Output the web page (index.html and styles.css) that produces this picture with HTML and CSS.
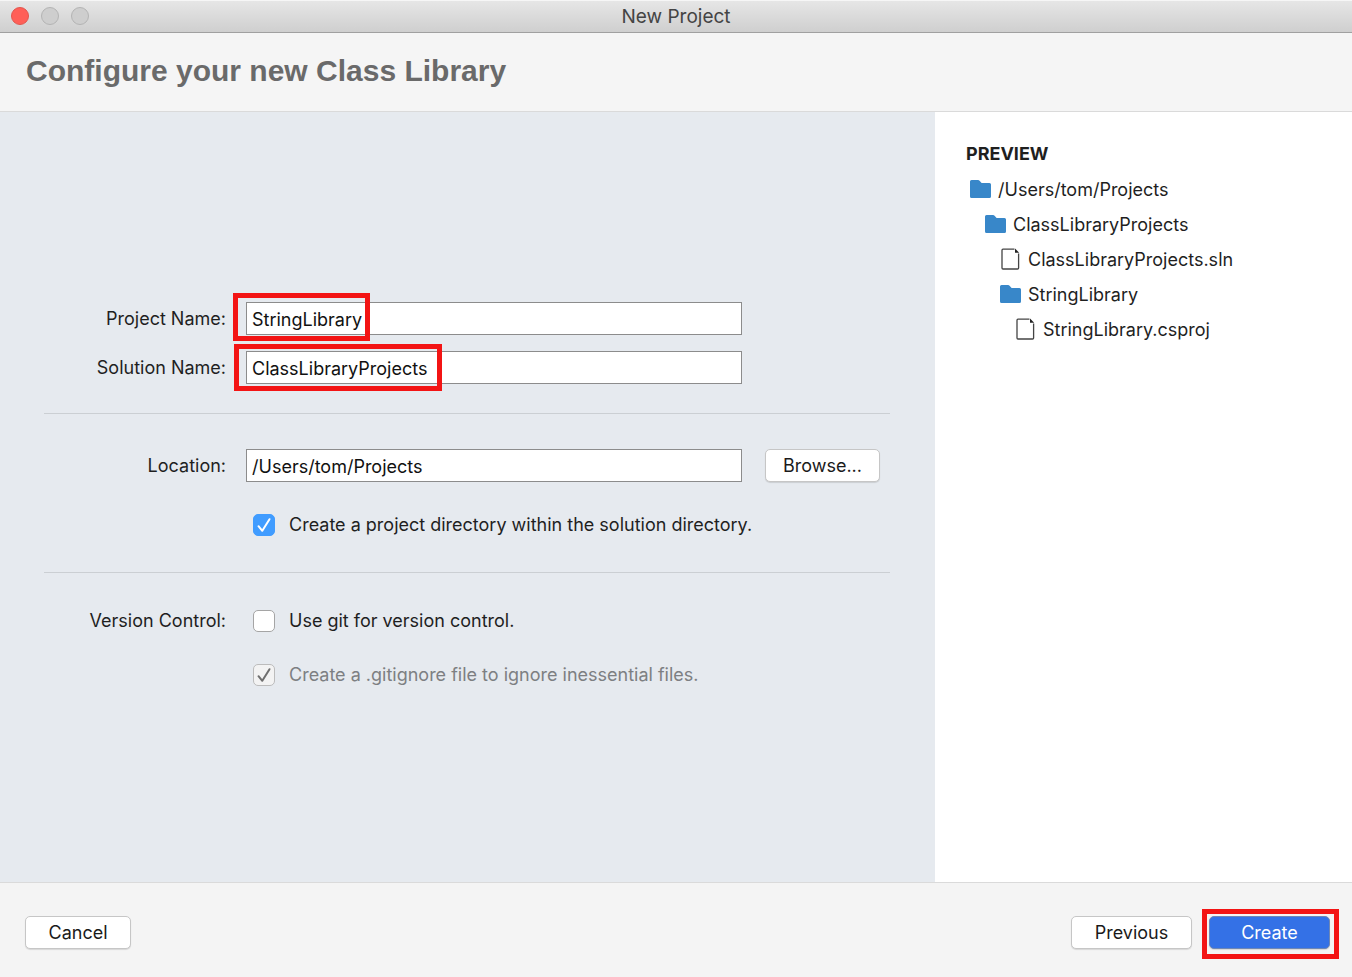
FILE: index.html
```html
<!doctype html>
<html lang="en">
  <head>
    <meta charset="UTF-8" />
    <meta name="viewport" content="width=device-width, initial-scale=1.0" />
    <title>New Project</title>
    <link rel="stylesheet" href="styles.css">
  </head>
  <body>
    <div class="titlebar">
      <div class="lights">
        <button class="light close" type="button" aria-label="Close"></button>
        <button class="light" type="button" aria-label="Minimize" disabled></button>
        <button class="light" type="button" aria-label="Zoom" disabled></button>
      </div>
      <span class="window-title">New Project</span>
    </div>

    <header class="page-header">
      <h1>Configure your new Class Library</h1>
    </header>

    <main class="content">
      <form class="settings" id="project-form">
        <section class="group names">
          <div class="row">
            <label class="row-label" for="project-name">Project Name:</label>
            <div class="field">
              <input class="text-box" id="project-name" type="text" value="StringLibrary">
              <span class="highlight highlight-project"></span>
            </div>
          </div>
          <div class="row">
            <label class="row-label" for="solution-name">Solution Name:</label>
            <div class="field">
              <input class="text-box" id="solution-name" type="text" value="ClassLibraryProjects">
              <span class="highlight highlight-solution"></span>
            </div>
          </div>
        </section>

        <section class="group location">
          <div class="row">
            <label class="row-label" for="location">Location:</label>
            <div class="field">
              <input class="text-box" id="location" type="text" value="/Users/tom/Projects">
            </div>
            <button class="btn" type="button">Browse...</button>
          </div>
          <div class="row">
            <label class="option" for="create-dir">
              <span class="tick">
                <input id="create-dir" type="checkbox" checked>
                <svg viewBox="0 0 22 22"><path d="M5.5 12.2l3.8 4.6 7.2-11.6" /></svg>
              </span>
              Create a project directory within the solution directory.
            </label>
          </div>
        </section>

        <section class="group version">
          <div class="row">
            <span class="row-label">Version Control:</span>
            <label class="option" for="use-git">
              <span class="tick">
                <input id="use-git" type="checkbox">
              </span>
              Use git for version control.
            </label>
          </div>
          <div class="row">
            <label class="option disabled" for="gitignore">
              <span class="tick">
                <input id="gitignore" type="checkbox" checked disabled>
                <svg viewBox="0 0 22 22"><path d="M5.5 12.2l3.8 4.6 7.2-11.6" /></svg>
              </span>
              Create a .gitignore file to ignore inessential files.
            </label>
          </div>
        </section>
      </form>

      <aside class="preview">
        <h2>PREVIEW</h2>
        <ul class="tree">
          <li>
            <div class="node">
              <svg class="folder" viewBox="0 0 21 18"><path d="M0 1.5Q0 0 1.5 0H8Q9 0 9.8 1L11.6 3H19.5Q21 3 21 4.5V16.5Q21 18 19.5 18H1.5Q0 18 0 16.5Z" /></svg>
              /Users/tom/Projects
            </div>
            <ul>
              <li>
                <div class="node">
                  <svg class="folder" viewBox="0 0 21 18"><path d="M0 1.5Q0 0 1.5 0H8Q9 0 9.8 1L11.6 3H19.5Q21 3 21 4.5V16.5Q21 18 19.5 18H1.5Q0 18 0 16.5Z" /></svg>
                  ClassLibraryProjects
                </div>
                <ul>
                  <li>
                    <div class="node">
                      <svg class="file" viewBox="0 0 21 22"><path d="M14.5 1.2H3Q2 1.2 2 2.2V20Q2 21 3 21H17.6Q18.6 21 18.6 20V5.5" /><path class="fold" d="M15 .5L19.2 4.7H15Z" /></svg>
                      ClassLibraryProjects.sln
                    </div>
                  </li>
                  <li>
                    <div class="node">
                      <svg class="folder" viewBox="0 0 21 18"><path d="M0 1.5Q0 0 1.5 0H8Q9 0 9.8 1L11.6 3H19.5Q21 3 21 4.5V16.5Q21 18 19.5 18H1.5Q0 18 0 16.5Z" /></svg>
                      StringLibrary
                    </div>
                    <ul>
                      <li>
                        <div class="node">
                          <svg class="file" viewBox="0 0 21 22"><path d="M14.5 1.2H3Q2 1.2 2 2.2V20Q2 21 3 21H17.6Q18.6 21 18.6 20V5.5" /><path class="fold" d="M15 .5L19.2 4.7H15Z" /></svg>
                          StringLibrary.csproj
                        </div>
                      </li>
                    </ul>
                  </li>
                </ul>
              </li>
            </ul>
          </li>
        </ul>
      </aside>
    </main>

    <footer class="actions">
      <button class="btn cancel" type="button">Cancel</button>
      <button class="btn previous" type="button">Previous</button>
      <div class="create-wrap">
        <button class="btn primary" type="submit" form="project-form">Create</button>
        <span class="highlight highlight-create"></span>
      </div>
    </footer>
  </body>
</html>
```
FILE: styles.css
```css
* {
  box-sizing: border-box;
}
body {
  margin: 0;
  min-height: 100vh;
  display: flex;
  flex-direction: column;
  font-family: Inter, "Liberation Sans", sans-serif;
  font-size: 18px;
  line-height: 24px;
  color: #1f1f1f;
  background: #f4f4f4;
}

/* window chrome */
.titlebar {
  position: relative;
  display: flex;
  align-items: center;
  justify-content: center;
  height: 33px;
  padding-top: 1px;
  background: linear-gradient(#e6e6e6, #cfcfcf);
  border-top: 1px solid #f6f6f6;
  border-bottom: 1px solid #a0a0a0;
}
.lights {
  position: absolute;
  left: 11px;
  top: 6px;
  display: flex;
  gap: 12px;
}
.light {
  width: 18px;
  height: 18px;
  padding: 0;
  border: 1px solid #b4b4b4;
  border-radius: 50%;
  background: #cecece;
}
.light.close {
  background: #ff5f57;
  border-color: #e2554d;
}
.window-title {
  font-size: 19px;
  color: #444;
}

.page-header {
  padding: 18px 26px;
  height: 79px;
  border-bottom: 1px solid #dadada;
  background: #f5f5f5;
}
.page-header h1 {
  margin: 0;
  font-family: "Liberation Sans", Arial, sans-serif;
  font-size: 30px;
  line-height: 40px;
  font-weight: bold;
  color: #6a6a6a;
}

.content {
  flex: 1;
  display: flex;
}

/* settings form */
.settings {
  flex: 1;
  display: flex;
  flex-direction: column;
  justify-content: center;
  padding: 0 45px 5px 44px;
  background: #e6eaef;
}
.group {
  display: grid;
  padding-right: 10px;
}
.group + .group {
  border-top: 1px solid #cbcfd3;
}
.names {
  gap: 16px;
  padding-bottom: 29px;
}
.location {
  gap: 31px;
  padding-top: 35px;
  padding-bottom: 35px;
}
.version {
  gap: 30px;
  padding-top: 36px;
}
.row {
  display: grid;
  grid-template-columns: 182px 1fr 115px;
  column-gap: 20px;
  align-items: center;
}
.row-label {
  text-align: right;
}
.field {
  position: relative;
  display: flex;
  margin-right: 3px;
}
.text-box {
  width: 100%;
  height: 33px;
  padding: 1px 5px 0;
  border: 1px solid #8c8c8c;
  border-radius: 0;
  background: #fff;
  font: inherit;
  color: #111;
  outline: none;
}
.option {
  grid-column: 2 / -1;
  display: flex;
  align-items: center;
  gap: 14px;
  padding-left: 7px;
}
.option.disabled {
  color: #7d7f82;
}
.tick {
  position: relative;
  display: flex;
}
.tick input {
  appearance: none;
  width: 22px;
  height: 22px;
  margin: 0;
  border: 1px solid #a5a5a5;
  border-radius: 5px;
  background: #fff;
}
.tick input:checked {
  background: #409cff;
  border-color: #409cff;
}
.tick input:disabled {
  background: #f3f3f3;
  border-color: #bcbcbc;
}
.tick svg {
  position: absolute;
  inset: 0;
  fill: none;
  stroke: #fff;
  stroke-width: 2;
  stroke-linecap: round;
  stroke-linejoin: round;
  pointer-events: none;
}
.disabled .tick svg {
  stroke: #6f6f6f;
}

.btn {
  height: 33px;
  padding: 0;
  border: 1px solid #c6c6c6;
  border-radius: 5px;
  background: #fff;
  box-shadow: 0 1px 1px rgba(0, 0, 0, 0.12);
  font: inherit;
  color: #1a1a1a;
}

/* callout boxes around the values to enter */
.highlight {
  position: absolute;
  border: 5px solid #f31414;
  pointer-events: none;
}
.highlight-project {
  left: -13px;
  top: -9px;
  width: 137px;
  height: 48px;
}
.highlight-solution {
  left: -12px;
  top: -7px;
  width: 208px;
  height: 47px;
}
.highlight-create {
  inset: -7px -9px -10px -7px;
}

/* preview tree */
.preview {
  width: 417px;
  padding: 30px;
  background: #fff;
}
.preview h2 {
  margin: 0 0 6px 1px;
  font-size: 18px;
  line-height: 24px;
  font-weight: bold;
}
.tree,
.tree ul {
  margin: 0;
  padding: 0;
  list-style: none;
}
.tree ul {
  padding-left: 15px;
}
.node {
  display: flex;
  align-items: center;
  gap: 7px;
  height: 35px;
  padding-left: 5px;
}
.node svg {
  margin-bottom: 2px;
}
.folder {
  width: 21px;
  height: 18px;
  fill: #3887c9;
}
.file {
  width: 21px;
  height: 22px;
  fill: none;
  stroke: #444;
  stroke-width: 1.3;
}
.file .fold {
  fill: #222;
  stroke: none;
}

.actions {
  display: flex;
  align-items: flex-start;
  height: 95px;
  padding: 33px 22px 0 25px;
  border-top: 1px solid #dadada;
}
.actions .btn {
  width: 121px;
}
.actions .cancel {
  width: 106px;
  margin-right: auto;
}
.create-wrap {
  position: relative;
  display: flex;
  margin-left: 17px;
}
.btn.primary {
  border-color: #6e87b5;
  background: #3471e6;
  color: #fff;
}
```
